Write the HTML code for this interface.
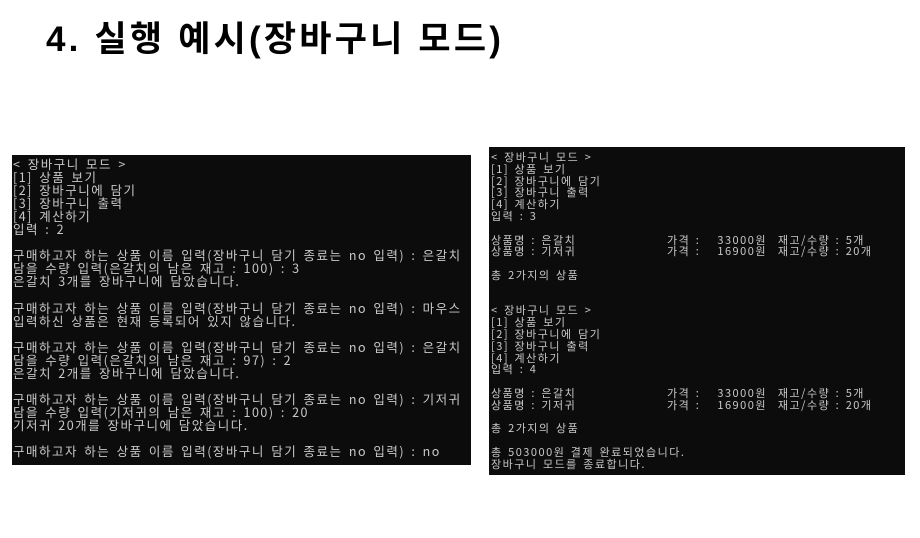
<!DOCTYPE html>
<html><head><meta charset="utf-8"><style>
body{margin:0;width:920px;height:538px;background:#fff;position:relative;overflow:hidden}
h1{position:absolute;left:46px;top:18px;margin:0;font:bold 35px/44px "Liberation Sans","Noto Sans CJK KR",sans-serif;color:#000;letter-spacing:3.2px}
.t{position:absolute;background:#0c0c0c;color:#c8c8c8;font-family:"Noto Sans CJK KR","NanumGothic",sans-serif;white-space:pre;overflow:hidden}
#a{left:12px;top:155px;width:459px;height:310px;font-size:12.5px;line-height:13.05px;padding-top:2px;box-sizing:border-box;padding-left:1px;letter-spacing:1.5px;word-spacing:2px}
#b{left:489px;top:147px;width:416px;height:328px;font-size:11px;line-height:11.8px;padding-top:5px;box-sizing:border-box;padding-left:2px;letter-spacing:1.5px;word-spacing:1.5px}
.c1{display:inline-block;width:176px}
.c2{display:inline-block;width:48px}
.c3{display:inline-block;width:52px;text-align:right}
</style></head><body>
<h1>4. 실행 예시(장바구니 모드)</h1>
<div class="t" id="a">&lt; 장바구니 모드 &gt;
[1] 상품 보기
[2] 장바구니에 담기
[3] 장바구니 출력
[4] 계산하기
입력 : 2

구매하고자 하는 상품 이름 입력(장바구니 담기 종료는 no 입력) : 은갈치
담을 수량 입력(은갈치의 남은 재고 : 100) : 3
은갈치 3개를 장바구니에 담았습니다.

구매하고자 하는 상품 이름 입력(장바구니 담기 종료는 no 입력) : 마우스
입력하신 상품은 현재 등록되어 있지 않습니다.

구매하고자 하는 상품 이름 입력(장바구니 담기 종료는 no 입력) : 은갈치
담을 수량 입력(은갈치의 남은 재고 : 97) : 2
은갈치 2개를 장바구니에 담았습니다.

구매하고자 하는 상품 이름 입력(장바구니 담기 종료는 no 입력) : 기저귀
담을 수량 입력(기저귀의 남은 재고 : 100) : 20
기저귀 20개를 장바구니에 담았습니다.

구매하고자 하는 상품 이름 입력(장바구니 담기 종료는 no 입력) : no</div>
<div class="t" id="b">&lt; 장바구니 모드 &gt;
[1] 상품 보기
[2] 장바구니에 담기
[3] 장바구니 출력
[4] 계산하기
입력 : 3

<span class="c1">상품명 : 은갈치</span><span class="c2">가격 :</span><span class="c3">33000원</span>  재고/수량 : 5개
<span class="c1">상품명 : 기저귀</span><span class="c2">가격 :</span><span class="c3">16900원</span>  재고/수량 : 20개

총 2가지의 상품


&lt; 장바구니 모드 &gt;
[1] 상품 보기
[2] 장바구니에 담기
[3] 장바구니 출력
[4] 계산하기
입력 : 4

<span class="c1">상품명 : 은갈치</span><span class="c2">가격 :</span><span class="c3">33000원</span>  재고/수량 : 5개
<span class="c1">상품명 : 기저귀</span><span class="c2">가격 :</span><span class="c3">16900원</span>  재고/수량 : 20개

총 2가지의 상품

총 503000원 결제 완료되었습니다.
장바구니 모드를 종료합니다.</div>
</body></html>
